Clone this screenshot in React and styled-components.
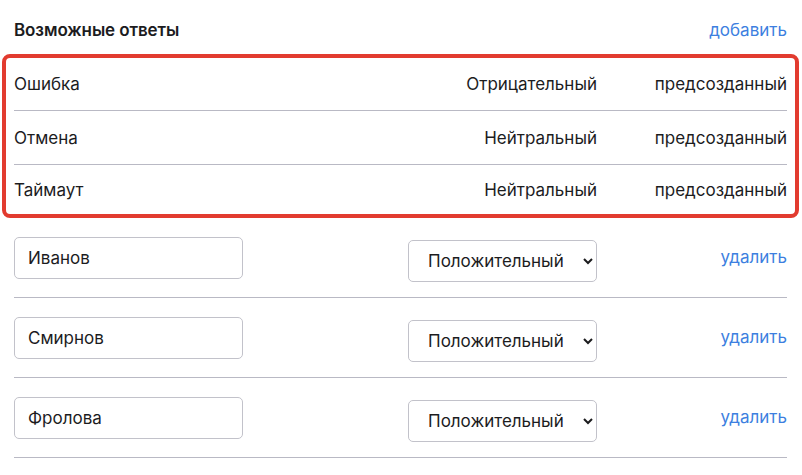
import React from 'react'
import styled, { createGlobalStyle } from 'styled-components'

const Global = createGlobalStyle`
  body {
    margin: 0;
    background: #ffffff;
    font-family: Inter, "Noto Sans", sans-serif;
    color: #1c1c1e;
  }
`

const Wrapper = styled.div`
  padding: 0 15px 0 14px;
`

const Header = styled.div`
  display: flex;
  justify-content: space-between;
  align-items: center;
  box-sizing: border-box;
  height: 54px;
  padding-top: 6px;
`

const Title = styled.h2`
  margin: 0;
  font-size: 17px;
  font-weight: 600;
  letter-spacing: -0.1px;
`

const Link = styled.a`
  color: #3d7fe0;
  font-size: 17px;
  text-decoration: none;
  cursor: pointer;
`

const Predefined = styled.div`
  margin: 0 -12px;
  padding: 0 8px;
  border: 4px solid #e23b2f;
  border-radius: 8px;
`

const FixedRow = styled.div`
  display: grid;
  grid-template-columns: 1fr 190px 190px;
  align-items: center;
  height: 53px;
  font-size: 17px;
  border-bottom: 1px solid #b9b9c4;

  &:first-child {
    height: 52px;
  }

  &:last-child {
    height: 49px;
    border-bottom: none;
  }
`

const Cell = styled.span`
  text-align: ${p => (p.$right ? 'right' : 'left')};
`

const EditRow = styled.div`
  display: flex;
  align-items: flex-start;
  padding: 19px 0 15px;
  border-bottom: 1px solid #b9b9c4;
`

const NameInput = styled.input`
  box-sizing: border-box;
  width: 229px;
  height: 42px;
  padding: 0 13px;
  font: inherit;
  font-size: 17px;
  color: #1c1c1e;
  border: 1px solid #c2c2ca;
  border-radius: 5px;
  outline: none;
`

const Kind = styled.select`
  box-sizing: border-box;
  margin: 3px 0 0 165px;
  width: 189px;
  height: 42px;
  padding: 0 12px 0 15px;
  font: inherit;
  font-size: 17px;
  color: #1c1c1e;
  background: #fff;
  border: 1px solid #c2c2ca;
  border-radius: 5px;
`

const Remove = styled(Link)`
  margin-left: auto;
  margin-top: 10px;
`

const fixed = [
  ['Ошибка', 'Отрицательный'],
  ['Отмена', 'Нейтральный'],
  ['Таймаут', 'Нейтральный'],
]

const custom = ['Иванов', 'Смирнов', 'Фролова']

export default function App() {
  return (
    <Wrapper>
      <Global />
      <Header>
        <Title>Возможные ответы</Title>
        <Link>добавить</Link>
      </Header>
      <Predefined>
        {fixed.map(([name, tone]) => (
          <FixedRow key={name}>
            <Cell>{name}</Cell>
            <Cell $right>{tone}</Cell>
            <Cell $right>предсозданный</Cell>
          </FixedRow>
        ))}
      </Predefined>
      {custom.map(name => (
        <EditRow key={name}>
          <NameInput defaultValue={name} />
          <Kind defaultValue="pos">
            <option value="pos">Положительный</option>
            <option value="neu">Нейтральный</option>
            <option value="neg">Отрицательный</option>
          </Kind>
          <Remove>удалить</Remove>
        </EditRow>
      ))}
    </Wrapper>
  )
}
